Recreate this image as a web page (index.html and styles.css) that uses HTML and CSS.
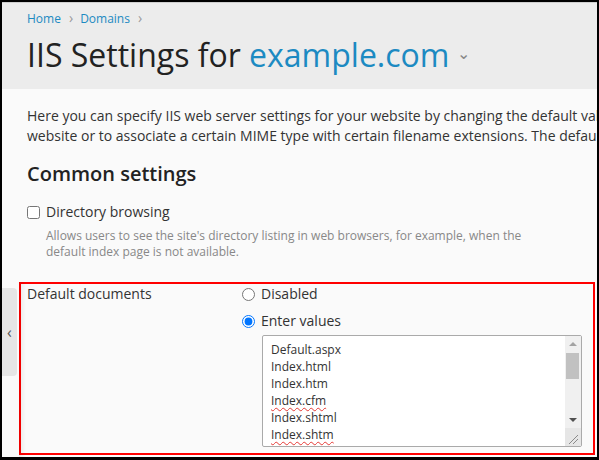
FILE: index.html
```html
<!DOCTYPE html>
<html lang="en">
<head>
    <meta charset="UTF-8">
    <title>IIS Settings for example.com</title>
    <link rel="stylesheet" href="styles.css">
</head>
<body>
    <div class="window">
        <div class="page-header">
            <div class="breadcrumbs">
                <a href="#">Home</a><span class="sep">&#8250;</span><a href="#">Domains</a><span class="sep">&#8250;</span>
            </div>
            <h1>IIS Settings for <span class="domain">example.com</span><span class="caret">&#8964;</span></h1>
        </div>

        <div class="page-content">
            <p class="intro">Here you can specify IIS web server settings for your website by changing the default values for the<br>website or to associate a certain MIME type with certain filename extensions. The default values are taken from the service plan.</p>

            <h2>Common settings</h2>

            <div class="field-check">
                <label><input type="checkbox"> Directory browsing</label>
                <div class="hint">Allows users to see the site's directory listing in web browsers, for example, when the<br>default index page is not available.</div>
            </div>

            <div class="form-row highlight">
                <div class="form-label">Default documents</div>
                <div class="form-field">
                    <label class="radio"><input type="radio" name="docs"> Disabled</label>
                    <label class="radio"><input type="radio" name="docs" checked> Enter values</label>
                    <div class="doc-list">
                        <div class="doc-lines">
                            <div>Default.aspx</div>
                            <div>Index.html</div>
                            <div>Index.htm</div>
                            <div class="typo">Index.cfm</div>
                            <div>Index.shtml</div>
                            <div class="typo">Index.shtm</div>
                            <div class="typo">Index.stm</div>
                            <div>Index.php</div>
                            <div>Index.php3</div>
                            <div>Index.asp</div>
                            <div>Index.aspx</div>
                            <div>Default.htm</div>
                            <div>Default.asp</div>
                        </div>
                        <div class="scrollbar">
                            <div class="sb-btn"><span class="arrow-up"></span></div>
                            <div class="sb-track"><div class="sb-thumb"></div></div>
                            <div class="sb-btn"><span class="arrow-down"></span></div>
                            <div class="sb-corner">
                                <svg width="16" height="18" viewBox="0 0 16 18">
                                    <path d="M4 16 L13 7 M8 16 L13 11" stroke="#8a8a8a" stroke-width="1" fill="none"/>
                                </svg>
                            </div>
                        </div>
                    </div>
                </div>
            </div>
        </div>

        <div class="side-toggle">&#8249;</div>
        <div class="side-shadow"></div>
    </div>
</body>
</html>
```

FILE: styles.css
```css
html, body {
    margin: 0;
    height: 100%;
    background: #000;
}
body {
    font-family: "Open Sans", Arial, sans-serif;
    color: #333;
}
.window {
    position: relative;
    margin: 2px 0 0 2px;
    width: 595px;
    height: 455px;
    background: #fafafa;
    overflow: hidden;
}
a {
    color: #1c8ac2;
    text-decoration: none;
}

/* header */
.page-header {
    background: #ececec;
    border-top: 1px solid #cfcfcf;
    height: 86px;
    padding-left: 25px;
}
.breadcrumbs {
    padding-top: 7px;
    font-size: 12px;
    line-height: 16px;
}
.breadcrumbs .sep {
    color: #999;
    margin: 0 7px 0 8px;
    font-size: 14px;
}
h1 {
    margin: 6px 0 0;
    font-size: 32px;
    font-weight: 400;
    line-height: 40px;
    color: #222;
    white-space: nowrap;
}
h1 .domain {
    color: #1c8ac2;
}
h1 .caret {
    color: #888;
    font-size: 16px;
    margin-left: 8px;
    vertical-align: 8px;
}

/* content */
.page-content {
    padding: 0 0 0 25px;
}
.intro {
    margin: 17px 0 0;
    font-size: 14px;
    line-height: 20px;
    white-space: nowrap;
}
h2 {
    margin: 14px 0 0;
    font-size: 20px;
    font-weight: 600;
    line-height: 28px;
    color: #222;
}
.field-check {
    margin-top: 14px;
}
.field-check label {
    display: flex;
    align-items: center;
    gap: 6px;
    font-size: 14px;
    line-height: 20px;
}
.field-check input {
    margin: 0;
    width: 13px;
    height: 13px;
}
.hint {
    margin: 6px 0 0 19px;
    font-size: 12px;
    line-height: 16px;
    color: #888;
}

/* default documents row */
.form-row {
    display: flex;
    margin: 22px 0 0 -8px;
    width: 566px;
    height: 169px;
    padding: 0 0 0 6px;
}
.highlight {
    border: 2px solid #f00;
}
.form-label {
    width: 215px;
    font-size: 14px;
    line-height: 20px;
}
.form-field {
    display: flex;
    flex-direction: column;
}
.radio {
    display: flex;
    align-items: center;
    gap: 6px;
    font-size: 14px;
    line-height: 20px;
    height: 20px;
    margin-bottom: 7px;
}
.radio input {
    margin: 0;
    width: 13px;
    height: 13px;
}

/* textarea look-alike with a classic scrollbar */
.doc-list {
    display: flex;
    margin: -3px 0 0 20px;
    width: 318px;
    height: 110px;
    border: 1px solid #aaa;
    border-radius: 2px;
    background: #fff;
}
.doc-lines {
    flex: 1;
    overflow: hidden;
    padding: 5px 8px;
    font-size: 12px;
    line-height: 17px;
    color: #333;
}
.typo {
    text-decoration: underline wavy #e53935;
    text-decoration-thickness: 1px;
    text-underline-offset: 2px;
}
.scrollbar {
    width: 16px;
    display: flex;
    flex-direction: column;
    background: #f0f0f0;
}
.sb-btn {
    height: 16px;
    display: flex;
    align-items: center;
    justify-content: center;
}
.arrow-up {
    border-left: 4px solid transparent;
    border-right: 4px solid transparent;
    border-bottom: 4px solid #a3a3a3;
}
.arrow-down {
    border-left: 4px solid transparent;
    border-right: 4px solid transparent;
    border-top: 4px solid #505050;
}
.sb-track {
    height: 60px;
    padding: 1px 2px 0 1px;
}
.sb-thumb {
    height: 26px;
    background: #c1c1c1;
}
.sb-corner {
    height: 18px;
    background: #e6e6e6;
}
.sb-corner svg {
    display: block;
}

/* collapsed side panel */
.side-toggle {
    position: absolute;
    left: 0;
    top: 286px;
    width: 15px;
    height: 88px;
    background: #e6e6e6;
    border-radius: 0 4px 4px 0;
    color: #555;
    font-size: 16px;
    line-height: 88px;
    text-align: center;
}
.side-shadow {
    position: absolute;
    left: 17px;
    top: 280px;
    bottom: 0;
    width: 7px;
    background: linear-gradient(to right, rgba(0,0,0,0.07), rgba(0,0,0,0));
}
```
